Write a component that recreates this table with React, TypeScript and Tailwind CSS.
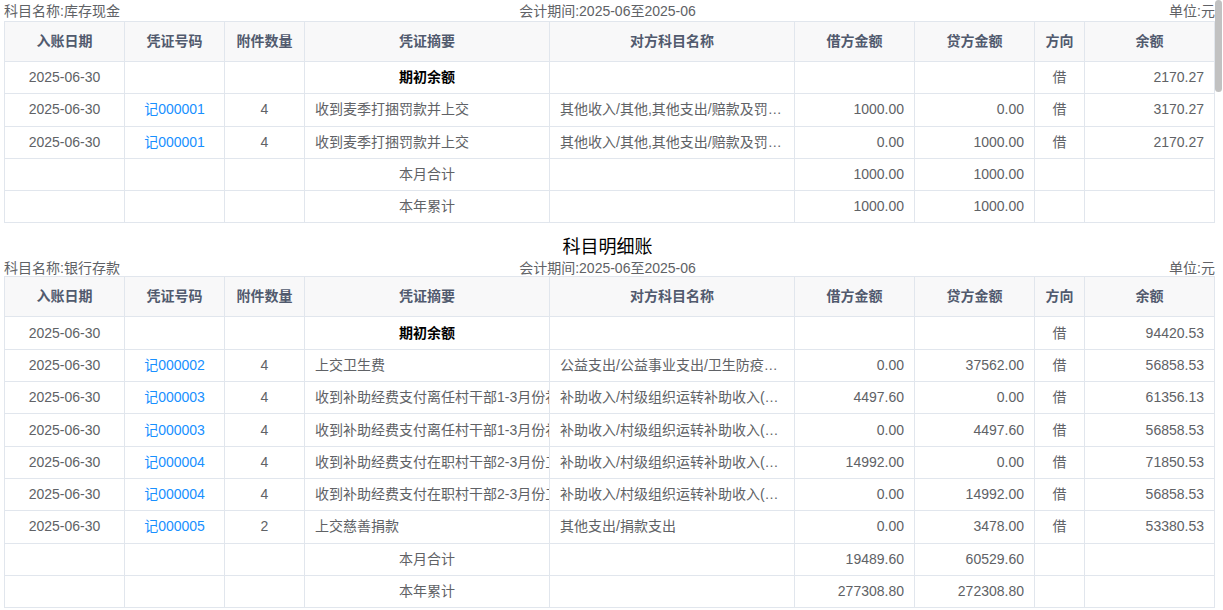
import React from "react";

type Row = {
  date?: string;
  no?: string;
  att?: string;
  summary?: string;
  opp?: string;
  debit?: string;
  credit?: string;
  dir?: string;
  bal?: string;
  kind?: "open" | "total";
};

type Ledger = {
  name: string;
  showTitle: boolean;
  rows: Row[];
};

const ledgers: Ledger[] = [
  {
    name: "库存现金",
    showTitle: false,
    rows: [
      { date: "2025-06-30", summary: "期初余额", dir: "借", bal: "2170.27", kind: "open" },
      {
        date: "2025-06-30",
        no: "记000001",
        att: "4",
        summary: "收到麦季打捆罚款并上交",
        opp: "其他收入/其他,其他支出/赔款及罚款支出",
        debit: "1000.00",
        credit: "0.00",
        dir: "借",
        bal: "3170.27",
      },
      {
        date: "2025-06-30",
        no: "记000001",
        att: "4",
        summary: "收到麦季打捆罚款并上交",
        opp: "其他收入/其他,其他支出/赔款及罚款支出",
        debit: "0.00",
        credit: "1000.00",
        dir: "借",
        bal: "2170.27",
      },
      { summary: "本月合计", debit: "1000.00", credit: "1000.00", kind: "total" },
      { summary: "本年累计", debit: "1000.00", credit: "1000.00", kind: "total" },
    ],
  },
  {
    name: "银行存款",
    showTitle: true,
    rows: [
      { date: "2025-06-30", summary: "期初余额", dir: "借", bal: "94420.53", kind: "open" },
      {
        date: "2025-06-30",
        no: "记000002",
        att: "4",
        summary: "上交卫生费",
        opp: "公益支出/公益事业支出/卫生防疫支出",
        debit: "0.00",
        credit: "37562.00",
        dir: "借",
        bal: "56858.53",
      },
      {
        date: "2025-06-30",
        no: "记000003",
        att: "4",
        summary: "收到补助经费支付离任村干部1-3月份补贴",
        opp: "补助收入/村级组织运转补助收入(离任村干部)",
        debit: "4497.60",
        credit: "0.00",
        dir: "借",
        bal: "61356.13",
      },
      {
        date: "2025-06-30",
        no: "记000003",
        att: "4",
        summary: "收到补助经费支付离任村干部1-3月份补贴",
        opp: "补助收入/村级组织运转补助收入(离任村干部)",
        debit: "0.00",
        credit: "4497.60",
        dir: "借",
        bal: "56858.53",
      },
      {
        date: "2025-06-30",
        no: "记000004",
        att: "4",
        summary: "收到补助经费支付在职村干部2-3月份工资",
        opp: "补助收入/村级组织运转补助收入(在职村干部)",
        debit: "14992.00",
        credit: "0.00",
        dir: "借",
        bal: "71850.53",
      },
      {
        date: "2025-06-30",
        no: "记000004",
        att: "4",
        summary: "收到补助经费支付在职村干部2-3月份工资",
        opp: "补助收入/村级组织运转补助收入(在职村干部)",
        debit: "0.00",
        credit: "14992.00",
        dir: "借",
        bal: "56858.53",
      },
      {
        date: "2025-06-30",
        no: "记000005",
        att: "2",
        summary: "上交慈善捐款",
        opp: "其他支出/捐款支出",
        debit: "0.00",
        credit: "3478.00",
        dir: "借",
        bal: "53380.53",
      },
      { summary: "本月合计", debit: "19489.60", credit: "60529.60", kind: "total" },
      { summary: "本年累计", debit: "277308.80", credit: "272308.80", kind: "total" },
    ],
  },
];

const headers = [
  { label: "入账日期", w: "w-[120px]" },
  { label: "凭证号码", w: "w-[100px]" },
  { label: "附件数量", w: "w-[80px]" },
  { label: "凭证摘要", w: "w-[245px]" },
  { label: "对方科目名称", w: "w-[245px]" },
  { label: "借方金额", w: "w-[120px]" },
  { label: "贷方金额", w: "w-[120px]" },
  { label: "方向", w: "w-[50px]" },
  { label: "余额", w: "w-[130px]" },
];

const td = "border border-[#e1e6ed] h-[32.3px] p-0 align-middle";
const cell = "px-[10px] overflow-hidden whitespace-nowrap";

const LedgerTable = ({ ledger }: { ledger: Ledger }) => (
  <section className={ledger.showTitle ? "mt-[10px]" : "pt-[2px]"}>
    {ledger.showTitle && (
      <div className="h-[26px] text-center text-[18px] leading-[28px] text-black">科目明细账</div>
    )}
    <div
      className={`grid grid-cols-3 text-[14px] leading-[19px] text-[#606266] ${
        ledger.showTitle ? "h-[17px]" : "h-[19px]"
      }`}
    >
      <span className="pl-[4px]">科目名称:{ledger.name}</span>
      <span className="text-center">会计期间:2025-06至2025-06</span>
      <span className="text-right">单位:元</span>
    </div>
    <table className="ml-[4px] w-[1210px] table-fixed border-collapse text-[14px] text-[#606266]">
      <colgroup>
        {headers.map((h) => (
          <col key={h.label} className={h.w} />
        ))}
      </colgroup>
      <thead>
        <tr>
          {headers.map((h) => (
            <th
              key={h.label}
              className="border border-[#e1e6ed] bg-[#f8f8f9] h-[40px] p-0 text-center font-bold text-[#515a6e]"
            >
              {h.label}
            </th>
          ))}
        </tr>
      </thead>
      <tbody>
        {ledger.rows.map((r, i) => (
          <tr key={i}>
            <td className={td}>
              <div className={`${cell} text-center`}>{r.date}</div>
            </td>
            <td className={td}>
              <div className={`${cell} text-center text-[#1890ff]`}>{r.no}</div>
            </td>
            <td className={td}>
              <div className={`${cell} text-center`}>{r.att}</div>
            </td>
            <td className={td}>
              {r.kind === "open" ? (
                <div className={`${cell} text-center font-bold text-black`}>{r.summary}</div>
              ) : r.kind === "total" ? (
                <div className={`${cell} text-center`}>{r.summary}</div>
              ) : (
                <div className={cell}>{r.summary}</div>
              )}
            </td>
            <td className={td}>
              <div className={`${cell} text-ellipsis`}>{r.opp}</div>
            </td>
            <td className={td}>
              <div className={`${cell} text-right`}>{r.debit}</div>
            </td>
            <td className={td}>
              <div className={`${cell} text-right`}>{r.credit}</div>
            </td>
            <td className={td}>
              <div className={`${cell} text-center`}>{r.dir}</div>
            </td>
            <td className={td}>
              <div className={`${cell} text-right`}>{r.bal}</div>
            </td>
          </tr>
        ))}
      </tbody>
    </table>
  </section>
);

export default function App() {
  return (
    <div
      className="flex h-[610px] w-[1223px] overflow-hidden bg-white"
      style={{ fontFamily: '"Liberation Sans", "Noto Sans CJK SC", sans-serif' }}
    >
      <main className="w-[1215px] shrink-0">
        {ledgers.map((l) => (
          <LedgerTable key={l.name} ledger={l} />
        ))}
      </main>
      <div className="w-[8px] shrink-0 bg-white">
        <div className="h-[92px] w-[7px] rounded-[4px] bg-[#c1c1c1]" />
      </div>
    </div>
  );
}
